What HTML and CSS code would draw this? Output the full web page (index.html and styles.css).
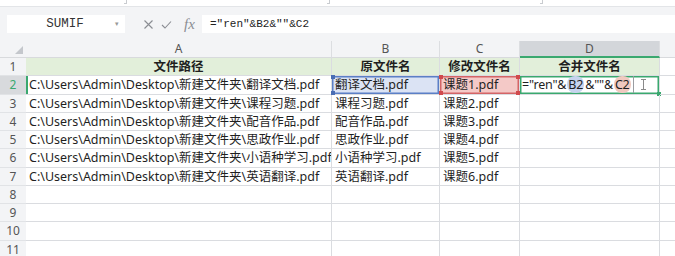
FILE: index.html
```html
<!DOCTYPE html>
<html lang="zh-CN">
<head>
<meta charset="utf-8">
<title>合并文件名</title>
<link rel="stylesheet" href="styles.css">
</head>
<body>
<div class="top"><span class="mark m1"></span><span class="mark m2"></span><span class="mark m3"></span></div>
<div class="fbar">
  <div class="namebox"><span class="nb-text">SUMIF</span><span class="caret">▾</span></div>
  <div class="ficons">
    <svg class="ic" width="11" height="11" viewBox="0 0 11 11"><path d="M1.5 1.5 L9.5 9.5 M9.5 1.5 L1.5 9.5" stroke="#8a8d93" stroke-width="1.1" fill="none"/></svg>
    <svg class="ic" width="11" height="11" viewBox="0 0 11 11"><path d="M1 6 L4 9 L10 2.5" stroke="#8a8d93" stroke-width="1.1" fill="none"/></svg>
    <span class="fx">fx</span>
  </div>
  <div class="finput">="ren"&amp;B2&amp;""&amp;C2</div>
</div>
<div class="sheet">
  <div class="corner"><svg width="8" height="8" viewBox="0 0 8 8"><path d="M8 0 L8 8 L0 8 Z" fill="#c4c7cc"/></svg></div>
  <div class="ch">A</div><div class="ch">B</div><div class="ch">C</div><div class="ch ch-sel">D</div><div class="ch ch-e"></div>

  <div class="rh">1</div>
  <div class="c hd">文件路径</div><div class="c hd">原文件名</div><div class="c hd">修改文件名</div><div class="c hd">合并文件名</div><div class="c ce"></div>

  <div class="rh rh-sel">2</div>
  <div class="c act">C:\Users\Admin\Desktop\新建文件夹\翻译文档.pdf</div>
  <div class="c selb">翻译文档.pdf</div>
  <div class="c selc">课题1.pdf</div>
  <div class="c edit"><span class="ed">="ren"&amp;<span class="pill pb">B2</span>&amp;""&amp;<span class="pill pc">C2</span></span><span class="ibeam"></span></div>
  <div class="c ce"></div>

  <div class="rh">3</div>
  <div class="c">C:\Users\Admin\Desktop\新建文件夹\课程习题.pdf</div><div class="c">课程习题.pdf</div><div class="c">课题2.pdf</div><div class="c"></div><div class="c ce"></div>

  <div class="rh">4</div>
  <div class="c">C:\Users\Admin\Desktop\新建文件夹\配音作品.pdf</div><div class="c">配音作品.pdf</div><div class="c">课题3.pdf</div><div class="c"></div><div class="c ce"></div>

  <div class="rh">5</div>
  <div class="c">C:\Users\Admin\Desktop\新建文件夹\思政作业.pdf</div><div class="c">思政作业.pdf</div><div class="c">课题4.pdf</div><div class="c"></div><div class="c ce"></div>

  <div class="rh">6</div>
  <div class="c">C:\Users\Admin\Desktop\新建文件夹\小语种学习.pdf</div><div class="c">小语种学习.pdf</div><div class="c">课题5.pdf</div><div class="c"></div><div class="c ce"></div>

  <div class="rh">7</div>
  <div class="c">C:\Users\Admin\Desktop\新建文件夹\英语翻译.pdf</div><div class="c">英语翻译.pdf</div><div class="c">课题6.pdf</div><div class="c"></div><div class="c ce"></div>

  <div class="rh">8</div><div class="c"></div><div class="c"></div><div class="c"></div><div class="c"></div><div class="c ce"></div>
  <div class="rh">9</div><div class="c"></div><div class="c"></div><div class="c"></div><div class="c"></div><div class="c ce"></div>
  <div class="rh">10</div><div class="c"></div><div class="c"></div><div class="c"></div><div class="c"></div><div class="c ce"></div>
  <div class="rh">11</div><div class="c"></div><div class="c"></div><div class="c"></div><div class="c"></div><div class="c ce"></div>
</div>
</body>
</html>
```
FILE: styles.css
```css
* { box-sizing: border-box; }
html, body { margin: 0; padding: 0; }
body {
  width: 675px;
  height: 256px;
  overflow: hidden;
  background: #ffffff;
  font-family: "Noto Sans", "Noto Sans CJK SC", sans-serif;
  color: #1f1f1f;
}
.top {
  height: 7px;
  background: #ffffff;
  border-bottom: 1px solid #e3e5e8;
  position: relative;
}
.mark {
  position: absolute;
  top: 0;
  width: 3px;
  height: 4px;
  border-right: 1px solid #c9ccd0;
  border-bottom: 1px solid #c9ccd0;
}
.m1 { left: 124px; }
.m2 { left: 327px; }
.m3 { left: 540px; }
.fbar {
  height: 34px;
  background: #f3f4f6;
  display: flex;
  align-items: flex-start;
  padding-top: 8px;
  padding-left: 7px;
}
.namebox {
  width: 118px;
  height: 18px;
  background: #ffffff;
  display: flex;
  align-items: center;
  font-family: "Liberation Mono", monospace;
  font-size: 12.5px;
  color: #333;
}
.nb-text { flex: 1; text-align: center; padding-left: 8px; }
.caret {
  font-family: "DejaVu Sans", sans-serif;
  font-size: 7px;
  color: #999;
  width: 10px;
}
.ficons {
  display: flex;
  align-items: center;
  height: 18px;
  gap: 7px;
  padding-left: 18px;
  width: 77px;
}
.fx {
  font-family: "Liberation Serif", serif;
  font-style: italic;
  font-size: 15px;
  color: #8a8d93;
  margin-left: 5px;
  line-height: 18px;
}
.finput {
  flex: 1;
  height: 18px;
  background: #ffffff;
  font-family: "Liberation Mono", monospace;
  font-size: 11px;
  line-height: 18px;
  padding-left: 8px;
  color: #222;
}
.sheet {
  display: grid;
  grid-template-columns: 26px 306px 108px 80px 140px 15px;
  grid-template-rows: 17px repeat(11, 18.25px);
}
.corner {
  background: #f3f4f6;
  border-bottom: 1px solid #d8dadd;
  display: flex;
  align-items: flex-end;
  justify-content: flex-end;
  padding: 0 3px 3px 0;
}
.ch {
  background: #f3f4f6;
  border-bottom: 1px solid #d8dadd;
  border-right: 1px solid #dcdee1;
  font-size: 12px;
  color: #555;
  text-align: center;
  line-height: 16px;
}
.ch-sel {
  background: #d3d6da;
  border-bottom: 2px solid #3aa86f;
}
.ch-e { border-right: none; }
.rh {
  background: #f3f4f6;
  border-bottom: 1px solid #e1e3e6;
  font-size: 12px;
  color: #555;
  text-align: center;
  line-height: 18px;
}
.rh-sel {
  background: #d8dadd;
  color: #3aa86f;
}
.c {
  border-right: 1px solid #dadce0;
  border-bottom: 1px solid #dadce0;
  font-size: 12.5px;
  line-height: 17px;
  padding-left: 3px;
  white-space: nowrap;
  overflow: hidden;
  position: relative;
}
.ce { border-right: none; }
.hd {
  background: #e2efda;
  font-weight: bold;
  text-align: center;
  padding-left: 0;
}
.act { box-shadow: inset 2px 0 0 #3aa86f; }
.selb {
  background: #dbe3f4;
  box-shadow: inset 0 0 0 1.5px #5b7fc6;
  overflow: visible;
}
.selb::before, .selb::after, .selc::before, .selc::after {
  content: "";
  position: absolute;
  width: 4px;
  height: 4px;
}
.selb::before { left: -1px; top: -1px; background: #4a6db3; }
.selb::after { left: -1px; bottom: -1px; background: #4a6db3; }
.selc {
  background: #f4c9c7;
  box-shadow: inset 0 0 0 1.5px #d46466;
  overflow: visible;
}
.selc::before { left: -1px; top: -1px; background: #d04a4d; box-shadow: 77px 0 0 #d04a4d; }
.selc::after { left: -1px; bottom: -1px; background: #d04a4d; box-shadow: 77px 0 0 #d04a4d; }
.edit {
  box-shadow: inset 0 0 0 1.5px #3aa86f;
  display: flex;
  align-items: center;
  font-size: 12.5px;
  padding-left: 2px;
  overflow: visible;
}
.edit::after {
  content: "";
  position: absolute;
  right: -2px;
  bottom: -2px;
  width: 4px;
  height: 4px;
  background: #3aa86f;
}
.ed {
  border-right: 1px solid #9a9da2;
  padding-right: 1px;
  height: 17px;
  line-height: 17px;
  letter-spacing: -0.2px;
}
.pill {
  border-radius: 8px;
  padding: 0 1px;
  margin: 0 1px;
}
.pb { background: #c7d3ee; }
.pc { background: #f0c9c0; }
.ibeam {
  position: absolute;
  left: 121px;
  top: 3px;
  width: 5px;
  height: 11px;
  background: linear-gradient(#8a8a8a, #8a8a8a) center / 1px 100% no-repeat;
}
.ibeam::before, .ibeam::after {
  content: "";
  position: absolute;
  left: 0;
  width: 5px;
  height: 1px;
  background: #8a8a8a;
}
.ibeam::before { top: 0; }
.ibeam::after { bottom: 0; }
```
